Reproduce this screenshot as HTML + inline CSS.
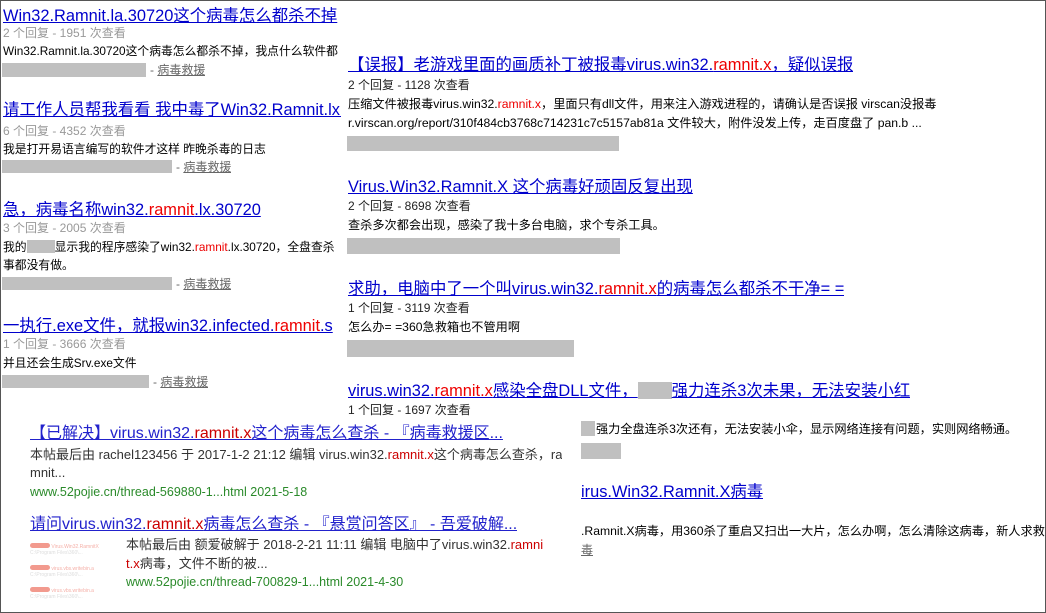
<!DOCTYPE html>
<html><head><meta charset="utf-8"><style>
*{margin:0;padding:0;box-sizing:border-box}
body{width:1046px;height:613px;position:relative;overflow:hidden;background:#fff;font-family:"Liberation Sans","Noto Sans CJK SC",sans-serif;}
.frame{position:absolute;left:0;top:0;width:1046px;height:613px;border:1px solid #555;z-index:10;pointer-events:none}
.a{position:absolute;white-space:nowrap;overflow:hidden}
.t{font-size:16.4px;color:#0000cc;text-decoration:underline;line-height:20px}
.r{color:#e00}
.m{font-size:12px;color:#999;line-height:16px}
.m2{font-size:12px;color:#222;line-height:16px}
.d{font-size:12.2px;color:#000;line-height:16px}
.g{position:absolute;background:#c0c0c0}
.lk{font-size:12px;color:#666;line-height:16px}
.lk u{color:#666}
.bw{font-size:13px;color:#333;line-height:18px}
.bw .r,.bt .r{color:#c00}
.url{font-size:12.5px;color:#2a8a2a;line-height:18px}
.bt{font-size:16px;color:#2222cc;text-decoration:underline;line-height:20px}
</style></head><body>
<div class="frame"></div>

<!-- left column -->
<div class="a t" style="left:3px;top:6px;width:338px">Win32.Ramnit.la.30720这个病毒怎么都杀不掉</div>
<div class="a m" style="left:3px;top:25px">2 个回复 - 1951 次查看</div>
<div class="a d" style="left:3px;top:43px;width:338px;font-size:11.8px">Win32.Ramnit.la.30720这个病毒怎么都杀不掉，我点什么软件都</div>
<div class="g" style="left:2px;top:63px;width:144px;height:14px"></div>
<div class="a lk" style="left:150px;top:62px">- <u>病毒救援</u></div>

<div class="a t" style="left:3px;top:100px;width:338px">请工作人员帮我看看 我中毒了Win32.Ramnit.lx.</div>
<div class="a m" style="left:3px;top:123px">6 个回复 - 4352 次查看</div>
<div class="a d" style="left:3px;top:141px;font-size:11.8px">我是打开易语言编写的软件才这样 昨晚杀毒的日志</div>
<div class="g" style="left:2px;top:160px;width:170px;height:13px"></div>
<div class="a lk" style="left:176px;top:159px">- <u>病毒救援</u></div>

<div class="a t" style="left:3px;top:200px;width:338px">急，病毒名称win32.<span class="r">ramnit</span>.lx.30720</div>
<div class="a m" style="left:3px;top:220px">3 个回复 - 2005 次查看</div>
<div class="a d" style="left:3px;top:239px;width:338px;font-size:11.8px">我的<span style="display:inline-block;width:28px;height:13px;background:#c0c0c0;vertical-align:-2px"></span>显示我的程序感染了win32.<span class="r">ramnit</span>.lx.30720，全盘查杀</div>
<div class="a d" style="left:3px;top:257px;font-size:11.8px">事都没有做。</div>
<div class="g" style="left:2px;top:277px;width:170px;height:13px"></div>
<div class="a lk" style="left:176px;top:276px">- <u>病毒救援</u></div>

<div class="a t" style="left:3px;top:316px;width:338px">一执行.exe文件，就报win32.infected.<span class="r">ramnit</span>.s</div>
<div class="a m" style="left:3px;top:336px">1 个回复 - 3666 次查看</div>
<div class="a d" style="left:3px;top:355px;font-size:11.8px">并且还会生成Srv.exe文件</div>
<div class="g" style="left:2px;top:375px;width:147px;height:13px"></div>
<div class="a lk" style="left:153px;top:374px">- <u>病毒救援</u></div>

<!-- right column -->
<div class="a t" style="left:348px;top:55px">【误报】老游戏里面的画质补丁被报毒virus.win32.<span class="r">ramnit.x</span>，疑似误报</div>
<div class="a m2" style="left:348px;top:77px">2 个回复 - 1128 次查看</div>
<div class="a d" style="left:348px;top:96px">压缩文件被报毒virus.win32.<span class="r">ramnit.x</span>，里面只有dll文件，用来注入游戏进程的，请确认是否误报 virscan没报毒</div>
<div class="a d" style="left:348px;top:115px">r.virscan.org/report/310f484cb3768c714231c7c5157ab81a 文件较大，附件没发上传，走百度盘了 pan.b ...</div>
<div class="g" style="left:347px;top:136px;width:272px;height:15px"></div>

<div class="a t" style="left:348px;top:177px">Virus.Win32.Ramnit.X 这个病毒好顽固反复出现</div>
<div class="a m2" style="left:348px;top:198px">2 个回复 - 8698 次查看</div>
<div class="a d" style="left:348px;top:217px">查杀多次都会出现，感染了我十多台电脑，求个专杀工具。</div>
<div class="g" style="left:347px;top:238px;width:273px;height:16px"></div>

<div class="a t" style="left:348px;top:279px">求助，电脑中了一个叫virus.win32.<span class="r">ramnit.x</span>的病毒怎么都杀不干净= =</div>
<div class="a m2" style="left:348px;top:300px">1 个回复 - 3119 次查看</div>
<div class="a d" style="left:348px;top:319px">怎么办= =360急救箱也不管用啊</div>
<div class="g" style="left:347px;top:340px;width:227px;height:17px"></div>

<div class="a t" style="left:348px;top:381px">virus.win32.<span class="r">ramnit.x</span>感染全盘DLL文件，<span style="display:inline-block;width:34px;height:17px;background:#c0c0c0;vertical-align:-3px"></span>强力连杀3次未果，无法安装小红</div>
<div class="a m2" style="left:348px;top:402px">1 个回复 - 1697 次查看</div>

<div class="g" style="left:581px;top:421px;width:14px;height:15px"></div>
<div class="a d" style="left:596px;top:421px">强力全盘连杀3次还有，无法安装小伞，显示网络连接有问题，实则网络畅通。</div>
<div class="g" style="left:581px;top:443px;width:40px;height:16px"></div>
<div class="a t" style="left:581px;top:482px">irus.Win32.Ramnit.X病毒</div>
<div class="a d" style="left:581px;top:523px;width:464px">.Ramnit.X病毒，用360杀了重启又扫出一大片，怎么办啊，怎么清除这病毒，新人求救</div>
<div class="a lk" style="left:581px;top:542px"><u>毒</u></div>

<!-- bottom overlay -->
<div style="position:absolute;left:1px;top:418px;width:579px;height:194px;background:#fff"></div>
<div class="a bt" style="left:30px;top:424px">【已解决】virus.win32.<span class="r">ramnit.x</span>这个病毒怎么查杀 - 『病毒救援区...</div>
<div class="a bw" style="left:30px;top:446px">本帖最后由 rachel123456 于 2017-1-2 21:12 编辑 virus.win32.<span class="r">ramnit.x</span>这个病毒怎么查杀，ra</div>
<div class="a bw" style="left:30px;top:464px">mnit...</div>
<div class="a url" style="left:30px;top:483px">www.52pojie.cn/thread-569880-1...html 2021-5-18</div>

<div class="a bt" style="left:30px;top:515px">请问virus.win32.<span class="r">ramnit.x</span>病毒怎么查杀 - 『悬赏问答区』 - 吾爱破解...</div>
<div style="position:absolute;left:30px;top:541px;width:92px;height:64px;font-size:5px;color:#ddd;line-height:6px">
<div style="margin-top:2px"><span style="display:inline-block;width:20px;height:5px;background:#f29a8e;border-radius:3px"></span> <span style="color:#f5b0a8">Virus.Win32.RamnitX</span></div><div>C:\Program Files\360\...</div>
<div style="margin-top:9px"><span style="display:inline-block;width:20px;height:5px;background:#f29a8e;border-radius:3px"></span> <span style="color:#f5b0a8">virus.vbs.writebin.a</span></div><div>C:\Program Files\360\...</div>
<div style="margin-top:9px"><span style="display:inline-block;width:20px;height:5px;background:#f29a8e;border-radius:3px"></span> <span style="color:#f5b0a8">virus.vbs.writebin.a</span></div><div>C:\Program Files\360\...</div>
</div>
<div class="a bw" style="left:126px;top:536px">本帖最后由 额爱破解于 2018-2-21 11:11 编辑 电脑中了virus.win32.<span class="r">ramni</span></div>
<div class="a bw" style="left:126px;top:555px"><span class="r">t.x</span>病毒，文件不断的被...</div>
<div class="a url" style="left:126px;top:573px">www.52pojie.cn/thread-700829-1...html 2021-4-30</div>
</body></html>
